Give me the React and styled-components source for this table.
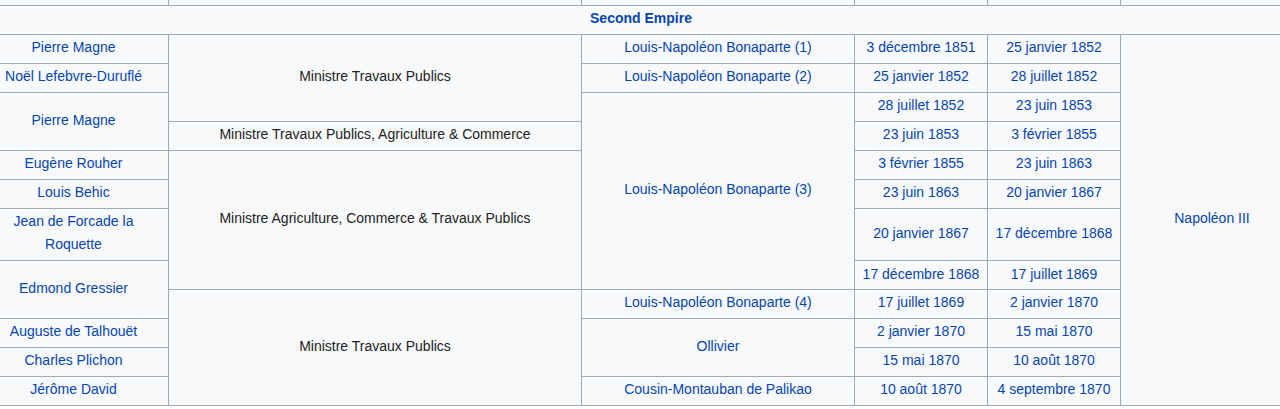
import React from "react";
import styled, { createGlobalStyle } from "styled-components";

const GlobalStyle = createGlobalStyle`
  html, body { margin: 0; padding: 0; background: #ffffff; }
  body { font-family: "Liberation Sans", Arial, sans-serif; color: #222222; }
`;

const Viewport = styled.div`
  width: 1280px;
  height: 409px;
  overflow: hidden;
  background: #ffffff;
`;

const Table = styled.table`
  margin: -24px 0 0 -22px;
  width: 1325px;
  table-layout: fixed;
  border-collapse: collapse;
  background: #f8f9fa;
  border: 1px solid #a2a9b1;
  font-size: 14px;
  line-height: 1.6;
  color: #222222;
`;

const Cell = styled.td`
  border: 1px solid #a2a9b1;
  padding: 1.2px 5.6px 4.4px;
  text-align: center;
  vertical-align: middle;
  line-height: ${(p) => (p.$wrap ? "23px" : "inherit")};
`;

const Link = styled.a`
  color: #0645ad;
  text-decoration: none;
  font-weight: ${(p) => (p.$bold ? "bold" : "normal")};
`;

const widths = [190, 413, 273, 133, 133, 183];

const L = ({ children, bold }) => (
  <Link href="#" $bold={bold} onClick={(e) => e.preventDefault()}>
    {children}
  </Link>
);

export default function App() {
  return (
    <>
      <GlobalStyle />
      <Viewport>
        <Table>
          <colgroup>
            {widths.map((w, i) => (
              <col key={i} style={{ width: w }} />
            ))}
          </colgroup>
          <tbody>
            <tr>
              {widths.map((_, i) => (
                <Cell key={i}>&nbsp;</Cell>
              ))}
            </tr>
            <tr>
              <Cell colSpan={6}>
                <L bold>Second Empire</L>
              </Cell>
            </tr>
            <tr>
              <Cell><L>Pierre Magne</L></Cell>
              <Cell rowSpan={3}>Ministre Travaux Publics</Cell>
              <Cell><L>Louis-Napoléon Bonaparte (1)</L></Cell>
              <Cell><L>3 décembre 1851</L></Cell>
              <Cell><L>25 janvier 1852</L></Cell>
              <Cell rowSpan={12}><L>Napoléon III</L></Cell>
            </tr>
            <tr>
              <Cell><L>Noël Lefebvre-Duruflé</L></Cell>
              <Cell><L>Louis-Napoléon Bonaparte (2)</L></Cell>
              <Cell><L>25 janvier 1852</L></Cell>
              <Cell><L>28 juillet 1852</L></Cell>
            </tr>
            <tr>
              <Cell rowSpan={2}><L>Pierre Magne</L></Cell>
              <Cell rowSpan={6}><L>Louis-Napoléon Bonaparte (3)</L></Cell>
              <Cell><L>28 juillet 1852</L></Cell>
              <Cell><L>23 juin 1853</L></Cell>
            </tr>
            <tr>
              <Cell>Ministre Travaux Publics, Agriculture &amp; Commerce</Cell>
              <Cell><L>23 juin 1853</L></Cell>
              <Cell><L>3 février 1855</L></Cell>
            </tr>
            <tr>
              <Cell><L>Eugène Rouher</L></Cell>
              <Cell rowSpan={4}>Ministre Agriculture, Commerce &amp; Travaux Publics</Cell>
              <Cell><L>3 février 1855</L></Cell>
              <Cell><L>23 juin 1863</L></Cell>
            </tr>
            <tr>
              <Cell><L>Louis Behic</L></Cell>
              <Cell><L>23 juin 1863</L></Cell>
              <Cell><L>20 janvier 1867</L></Cell>
            </tr>
            <tr>
              <Cell $wrap><L>Jean de Forcade la Roquette</L></Cell>
              <Cell><L>20 janvier 1867</L></Cell>
              <Cell><L>17 décembre 1868</L></Cell>
            </tr>
            <tr>
              <Cell rowSpan={2}><L>Edmond Gressier</L></Cell>
              <Cell><L>17 décembre 1868</L></Cell>
              <Cell><L>17 juillet 1869</L></Cell>
            </tr>
            <tr>
              <Cell rowSpan={4}>Ministre Travaux Publics</Cell>
              <Cell><L>Louis-Napoléon Bonaparte (4)</L></Cell>
              <Cell><L>17 juillet 1869</L></Cell>
              <Cell><L>2 janvier 1870</L></Cell>
            </tr>
            <tr>
              <Cell><L>Auguste de Talhouët</L></Cell>
              <Cell rowSpan={2}><L>Ollivier</L></Cell>
              <Cell><L>2 janvier 1870</L></Cell>
              <Cell><L>15 mai 1870</L></Cell>
            </tr>
            <tr>
              <Cell><L>Charles Plichon</L></Cell>
              <Cell><L>15 mai 1870</L></Cell>
              <Cell><L>10 août 1870</L></Cell>
            </tr>
            <tr>
              <Cell><L>Jérôme David</L></Cell>
              <Cell><L>Cousin-Montauban de Palikao</L></Cell>
              <Cell><L>10 août 1870</L></Cell>
              <Cell><L>4 septembre 1870</L></Cell>
            </tr>
          </tbody>
        </Table>
      </Viewport>
    </>
  );
}
